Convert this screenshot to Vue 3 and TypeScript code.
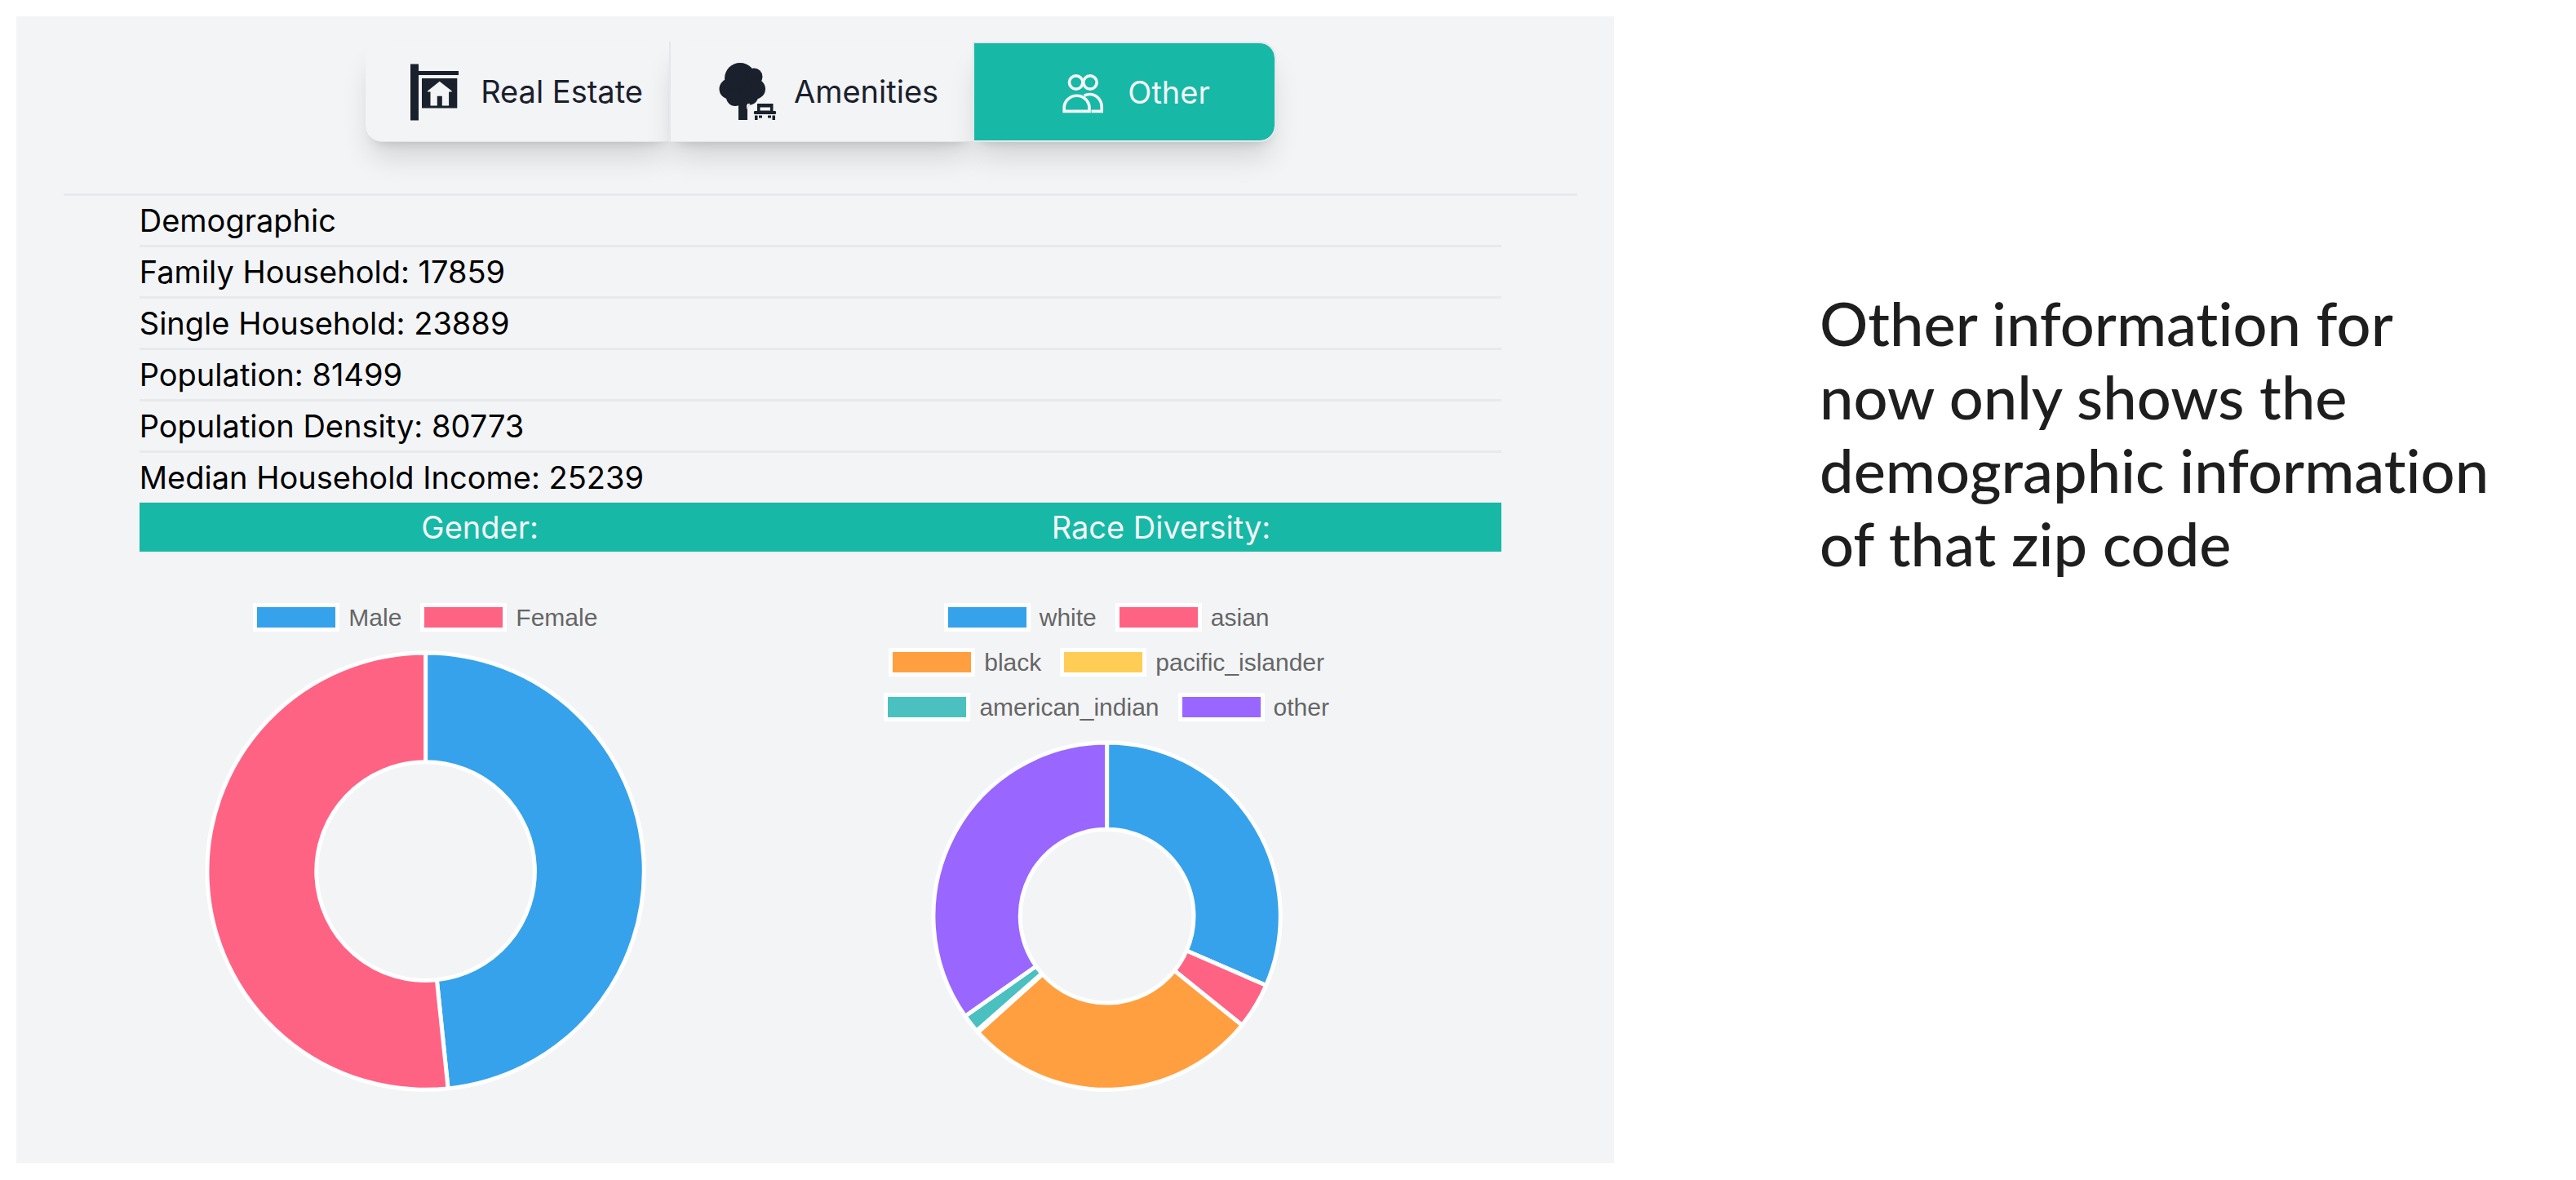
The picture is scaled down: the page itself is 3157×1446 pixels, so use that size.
<script setup lang="ts">
import { computed, ref } from 'vue'

type TabId = 'estate' | 'amenities' | 'other'

interface Slice {
  label: string
  color: string
  degrees: number
}

interface Chart {
  title: string
  radius: number
  slices: Slice[]
}

const activeTab = ref<TabId>('other')

const facts: { label: string; value?: number }[] = [
  { label: 'Demographic' },
  { label: 'Family Household', value: 17859 },
  { label: 'Single Household', value: 23889 },
  { label: 'Population', value: 81499 },
  { label: 'Population Density', value: 80773 },
  { label: 'Median Household Income', value: 25239 },
]

const charts: Chart[] = [
  {
    title: 'Gender:',
    radius: 268,
    slices: [
      { label: 'Male', color: '#36a2eb', degrees: 174.1 },
      { label: 'Female', color: '#ff6384', degrees: 185.9 },
    ],
  },
  {
    title: 'Race Diversity:',
    radius: 213,
    slices: [
      { label: 'white', color: '#36a2eb', degrees: 113.5 },
      { label: 'asian', color: '#ff6384', degrees: 15.4 },
      { label: 'black', color: '#ff9f40', degrees: 99.1 },
      { label: 'pacific_islander', color: '#ffcd56', degrees: 0.7 },
      { label: 'american_indian', color: '#4bc0c0', degrees: 6.1 },
      { label: 'other', color: '#9966ff', degrees: 125.2 },
    ],
  },
]

function point(radius: number, degrees: number): string {
  const angle = ((degrees - 90) * Math.PI) / 180
  return `${(radius * Math.cos(angle)).toFixed(2)} ${(radius * Math.sin(angle)).toFixed(2)}`
}

function ringSlice(radius: number, from: number, to: number): string {
  const inner = radius / 2
  const large = to - from > 180 ? 1 : 0
  return (
    `M${point(radius, from)} A${radius} ${radius} 0 ${large} 1 ${point(radius, to)} ` +
    `L${point(inner, to)} A${inner} ${inner} 0 ${large} 0 ${point(inner, from)} Z`
  )
}

const donuts = computed(() =>
  charts.map((chart) => {
    const edge = chart.radius + 3
    let start = 0
    const paths = chart.slices.map((slice) => {
      const d = ringSlice(chart.radius, start, start + slice.degrees)
      start += slice.degrees
      return { d, color: slice.color }
    })
    return { ...chart, paths, viewBox: `${-edge} ${-edge} ${edge * 2} ${edge * 2}` }
  }),
)
</script>

<template>
  <main class="page">
    <section class="panel">
      <nav class="tabs">
        <button type="button" class="tab" :class="{ active: activeTab === 'estate' }" @click="activeTab = 'estate'">
          <svg class="icon" viewBox="0 0 72 72" aria-hidden="true">
            <path
              fill="currentColor"
              fill-rule="evenodd"
              d="M6 2.500h10v8.500h49v5h-49v55.500h-10zM20 20h43.300v36.500h-43.300zM41.700 23.800L27 35.500v1h3.500v17h8.300v-11.700h6v11.700h8.300v-17h3.600v-1z"
            />
          </svg>
          <span>Real Estate</span>
        </button>
        <button type="button" class="tab" :class="{ active: activeTab === 'amenities' }" @click="activeTab = 'amenities'">
          <svg class="icon" viewBox="0 0 72 72" fill="currentColor" aria-hidden="true">
            <circle cx="26" cy="20" r="19" />
            <circle cx="43" cy="18" r="10.500" />
            <circle cx="44.500" cy="33" r="12.500" />
            <circle cx="13" cy="33" r="12.500" />
            <circle cx="20" cy="43" r="11" />
            <circle cx="37" cy="41" r="11.500" />
            <path d="M24 48h11v23h-11zM34 58l5-8h-5zM24 40h12v12h-12z" />
            <path
              fill-rule="evenodd"
              d="M47 51h19.500v9h3q1.500 2 0 4h-26q-1.500-2 0-4h3.500zM50.500 55.500v4h12.500v-4zM44 65.500h3.500v5.500h-3.500zM49 65.500h4v3h-4zM60 65.500h4v3h-4zM65.500 65.500h3.500v5.500h-3.500z"
            />
            <path fill="#f3f4f6" d="M35 51h3.500l-3.500 5z" />
          </svg>
          <span>Amenities</span>
        </button>
        <button type="button" class="tab" :class="{ active: activeTab === 'other' }" @click="activeTab = 'other'">
          <svg class="icon" viewBox="0 0 72 72" fill="none" stroke="currentColor" stroke-width="3.700" aria-hidden="true">
            <circle cx="28.700" cy="24" r="8.200" />
            <circle cx="46" cy="24" r="8.200" />
            <path d="M14.200 59.300V54A15.500 15.500 0 0 1 45 54V59.300Z" />
            <path d="M38.500 40.300Q42 38.500 45.200 38.500A15 15.500 0 0 1 60.200 54V59.300H47.500" />
          </svg>
          <span>Other</span>
        </button>
      </nav>

      <div class="details">
        <ul class="facts">
          <li v-for="fact in facts" :key="fact.label">
            {{ fact.label }}<template v-if="fact.value !== undefined">: {{ fact.value }}</template>
          </li>
        </ul>

        <div class="charts">
          <section v-for="donut in donuts" :key="donut.title" class="chart">
            <h2>{{ donut.title }}</h2>
            <figure>
              <ul class="legend">
                <li v-for="slice in donut.slices" :key="slice.label">
                  <i :style="{ background: slice.color }"></i>{{ slice.label }}
                </li>
              </ul>
              <svg class="donut" :viewBox="donut.viewBox" role="img" :aria-label="donut.title">
                <path
                  v-for="path in donut.paths"
                  :key="path.color"
                  :d="path.d"
                  :fill="path.color"
                  stroke="#fff"
                  stroke-width="5"
                  stroke-linejoin="bevel"
                />
              </svg>
            </figure>
          </section>
        </div>
      </div>
    </section>

    <aside class="note">
      Other information for<br />now only shows the<br />demographic information<br />of that zip code
    </aside>
  </main>
</template>

<style>
body {
  margin: 0;
  background: #fff;
}
</style>

<style scoped>
.page {
  display: flex;
  align-items: flex-start;
  padding: 20px;
  font-family: Inter, 'Noto Sans', sans-serif;
  font-size: 38px;
  line-height: 60px;
  color: #000;
}

.panel {
  box-sizing: border-box;
  flex: 0 0 62.82%;
  padding: 31px 45px 87px 58px;
  background: #f3f4f6;
}

.tabs {
  display: flex;
  justify-content: center;
  margin-bottom: 63px;
}

.tab {
  box-sizing: border-box;
  display: flex;
  align-items: center;
  justify-content: center;
  gap: 20px;
  width: 372px;
  height: 123px;
  padding: 0 0 0 18px;
  border: 0;
  border-left: 2px solid #e5e7eb;
  border-bottom: 1px solid #e5e7eb;
  background: #f3f4f6;
  color: #1a202c;
  font: inherit;
  white-space: nowrap;
  box-shadow:
    0 24px 36px -7px rgba(0, 0, 0, 0.14),
    0 10px 14px -10px rgba(0, 0, 0, 0.16);
}

.tab:first-child {
  border-left: 0;
  border-radius: 20px 0 0 20px;
}

.tab:last-child {
  border-radius: 0 20px 20px 0;
}

.tab.active {
  border: 2px solid #e5e7eb;
  background: #17b8a6;
  background-clip: padding-box;
  color: #f3f4f6;
}

.icon {
  flex: none;
  width: 72px;
  height: 72px;
}

.details {
  border-top: 3px solid #e7e9ec;
}

.facts {
  width: 90%;
  margin: 0 auto;
  padding: 0;
  list-style: none;
}

.facts li + li {
  border-top: 3px solid #e7e9ec;
}

.charts {
  display: grid;
  grid-template-columns: 1fr 1fr;
  width: 90%;
  margin: 0 auto;
}

.chart h2 {
  margin: 0;
  border-top: 1px solid #e5e7eb;
  background: #17b8a6;
  color: #f3f4f6;
  font-size: inherit;
  font-weight: 400;
  text-align: center;
}

.chart figure {
  display: flex;
  flex-direction: column;
  gap: 23px;
  width: 84%;
  margin: 63px 0 0;
  aspect-ratio: 702 / 600;
}

.legend {
  display: flex;
  flex-wrap: wrap;
  justify-content: center;
  gap: 20px 23px;
  margin: 0 auto;
  padding: 0;
  max-width: 600px;
  color: #666;
  font-family: 'Liberation Sans', Arial, sans-serif;
  font-size: 30px;
  line-height: 35px;
  list-style: none;
}

.legend li {
  display: flex;
  gap: 11px;
}

.legend i {
  box-sizing: border-box;
  width: 106px;
  height: 35px;
  border: 5px solid #fff;
}

.donut {
  flex: 1;
  width: 100%;
  min-height: 0;
}

.note {
  flex: 1;
  padding: 331px 0 0 252px;
  color: #1e1e1e;
  font-family: Virgil, Lato, cursive;
  font-size: 74px;
  font-weight: 500;
  font-variant-ligatures: none;
  line-height: 90px;
  white-space: nowrap;
}
</style>
